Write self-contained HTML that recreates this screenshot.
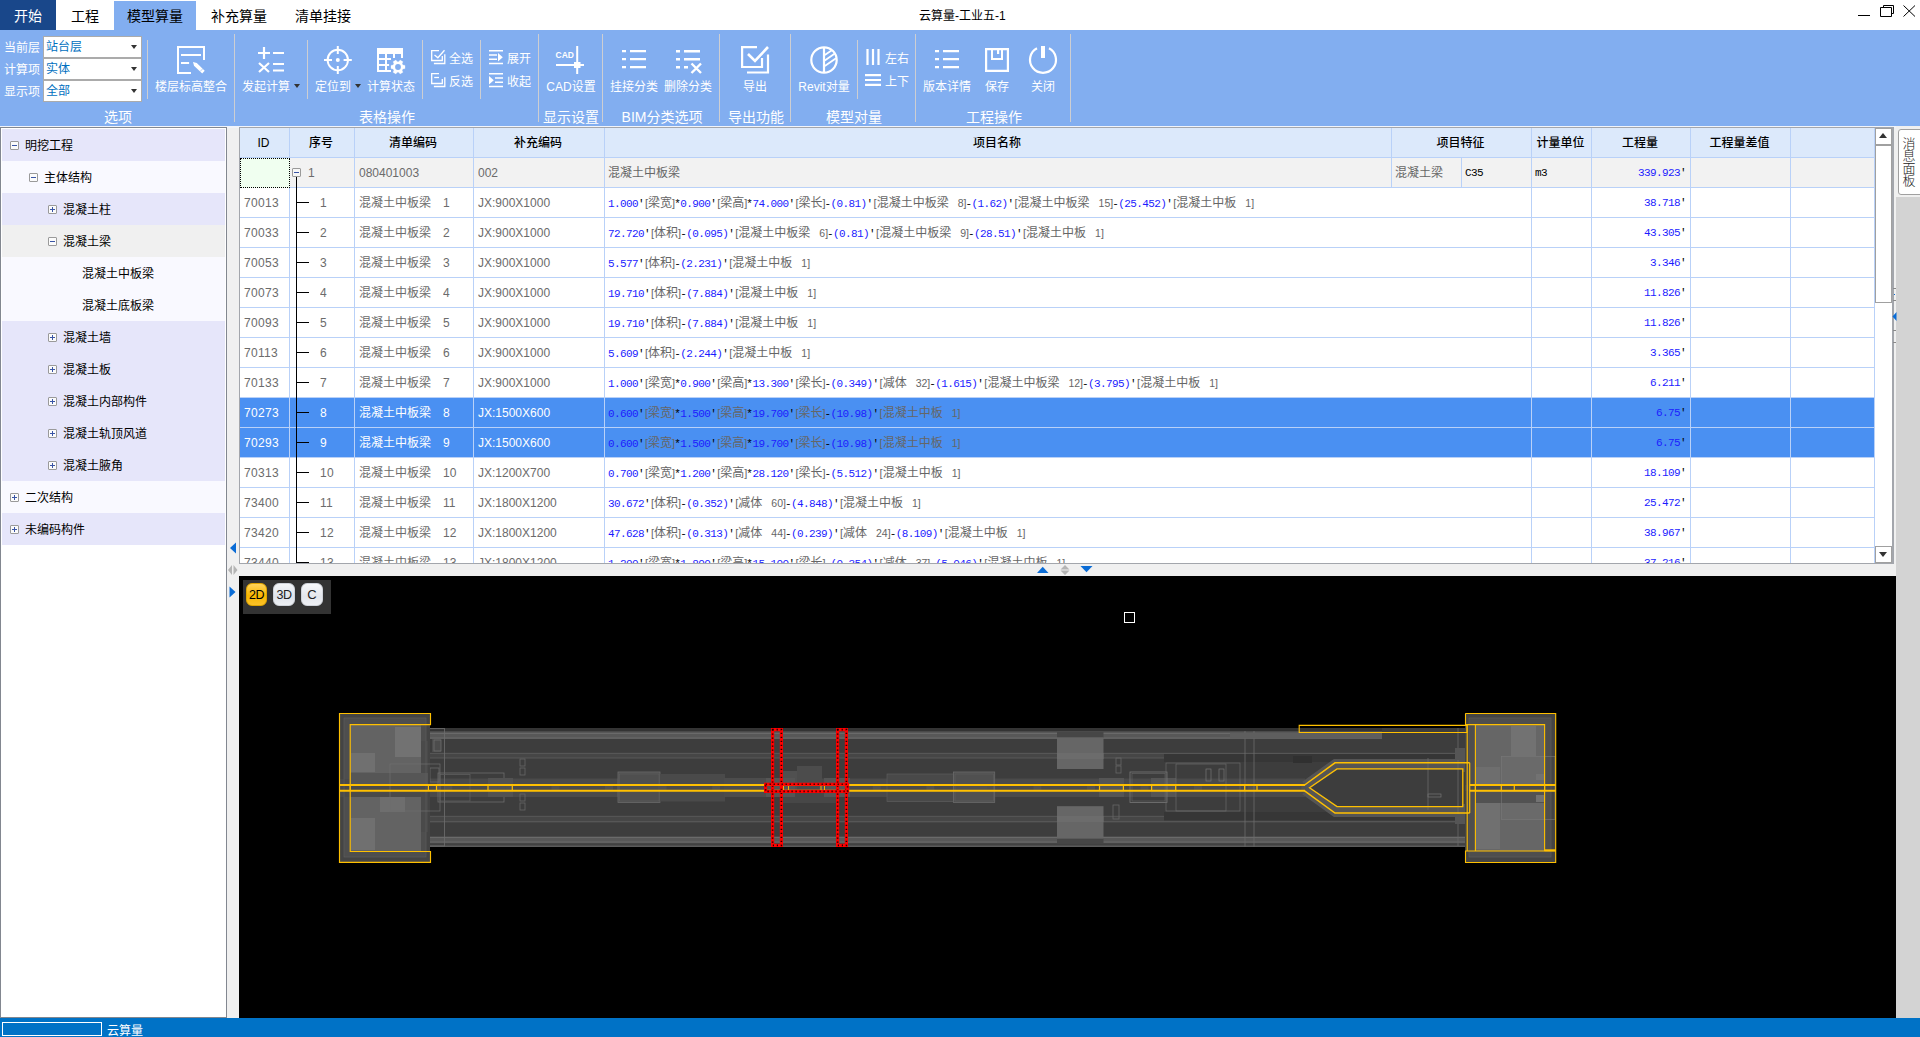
<!DOCTYPE html>
<html lang="zh-CN"><head><meta charset="utf-8"><title>云算量-工业五-1</title>
<style>
*{box-sizing:border-box}
html,body{margin:0;padding:0}
body{width:1920px;height:1037px;position:relative;overflow:hidden;background:#fff;
 font-family:"Liberation Sans","Noto Sans CJK SC",sans-serif;font-size:12px;color:#000}
.a{position:absolute}
.t{position:absolute;white-space:nowrap;line-height:16px;height:16px}
.w{color:#fff}
.tab{position:absolute;top:0;height:30px;line-height:33px;font-size:14px;text-align:center}
.rib{position:absolute;left:0;top:30px;width:1920px;height:96px;background:#82aef0}
.sep{position:absolute;width:1px;background:#cdced2}
.gl{position:absolute;top:109px;height:16px;line-height:16px;font-size:14px;color:#fff;white-space:nowrap;text-align:center}
.bl{position:absolute;top:79px;height:16px;line-height:16px;font-size:12px;color:#fff;white-space:nowrap;text-align:center}
.cb{position:absolute;left:43px;width:99px;height:22px;background:#fff;border:1px solid #ababab;color:#0070c0;font-size:12px;line-height:21px;padding-left:2px}
.cb i{position:absolute;right:4px;top:8px;width:0;height:0;border-left:3px solid transparent;border-right:3px solid transparent;border-top:4px solid #333}
svg{position:absolute;overflow:visible}
.tr{position:absolute;left:2px;width:223px;height:32px}
.tx{position:absolute;top:9px;line-height:16px;height:16px;font-size:12px;white-space:nowrap;font-weight:400;color:#000}
.bx{position:absolute;top:12px;width:9px;height:9px;border:1px solid #9a9a9a;background:#fbfbfb;border-radius:1px}
.bx:before{content:"";position:absolute;left:1px;top:3px;width:5px;height:1px;background:#3a55a5}
.bx.p:after{content:"";position:absolute;left:3px;top:1px;width:1px;height:5px;background:#3a55a5}
.row{position:absolute;left:240px;width:1635px;height:30px}
.c{position:absolute;top:0;height:30px;line-height:31px;white-space:nowrap;color:#6b6b6b;font-size:12px;overflow:hidden}
.hd{position:absolute;top:128px;height:30px;line-height:31px;text-align:center;font-weight:500;color:#000;font-size:12px;white-space:nowrap}
.m{font-family:"Liberation Mono","Noto Sans CJK SC",monospace;font-size:11px;letter-spacing:-0.6px}
.n{color:#1c1cff}
.g{color:#666;font-family:"Liberation Sans","Noto Sans CJK SC",sans-serif;font-size:12px;letter-spacing:0;font-weight:400;position:relative;left:1px}
.k{color:#000}
.vl{position:absolute;width:1px;background:#b9d1f8}
.hl{position:absolute;height:1px;background:#b9d1f8;left:240px;width:1635px}
</style></head><body>
<div class="tab" style="left:0;width:56px;background:#19478a;color:#fff">开始</div><div class="tab" style="left:56px;width:58px">工程</div><div class="tab" style="left:114px;width:82px;top:1px;height:29px;line-height:31px;background:#82aef0">模型算量</div><div class="tab" style="left:198px;width:82px">补充算量</div><div class="tab" style="left:282px;width:82px">清单挂接</div><div class="t" style="left:919px;top:8px;font-size:12px">云算量-工业五-1</div><svg style="left:1850px;top:0" width="70" height="30" fill="none" stroke="#000" stroke-width="1"><path d="M8 15.5H20"/><path d="M30.5 7.5H41.5V16.5H30.5Z"/><path d="M33.500 7.5V5.500H43.500V13.500H41.5"/><path d="M53.5 5.500L65 16.500M65 5.500L53.5 16.500"/></svg><div class="rib"></div><div class="t w" style="left:4px;top:40px">当前层</div><div class="cb" style="top:36px">站台层<i></i></div><div class="t w" style="left:4px;top:62px">计算项</div><div class="cb" style="top:58px">实体<i></i></div><div class="t w" style="left:4px;top:84px">显示项</div><div class="cb" style="top:80px">全部<i></i></div><div class="sep" style="left:147px;top:40px;height:59px"></div><div class="sep" style="left:307px;top:40px;height:59px"></div><div class="sep" style="left:422px;top:40px;height:59px"></div><div class="sep" style="left:480px;top:40px;height:59px"></div><div class="sep" style="left:857px;top:40px;height:59px"></div><div class="sep" style="left:234px;top:34px;height:88px"></div><div class="sep" style="left:538px;top:34px;height:88px"></div><div class="sep" style="left:602px;top:34px;height:88px"></div><div class="sep" style="left:719px;top:34px;height:88px"></div><div class="sep" style="left:790px;top:34px;height:88px"></div><div class="sep" style="left:915px;top:34px;height:88px"></div><div class="sep" style="left:1070px;top:34px;height:88px"></div><div class="gl" style="left:58px;width:120px">选项</div><div class="gl" style="left:327px;width:120px">表格操作</div><div class="gl" style="left:511px;width:120px">显示设置</div><div class="gl" style="left:602px;width:120px">BIM分类选项</div><div class="gl" style="left:696px;width:120px">导出功能</div><div class="gl" style="left:794px;width:120px">模型对量</div><div class="gl" style="left:934px;width:120px">工程操作</div><div class="bl" style="left:141px;width:100px">楼层标高整合</div><div class="bl" style="left:216px;width:100px">发起计算</div><div class="bl" style="left:283px;width:100px">定位到</div><div class="bl" style="left:341px;width:100px">计算状态</div><div class="bl" style="left:521px;width:100px">CAD设置</div><div class="bl" style="left:584px;width:100px">挂接分类</div><div class="bl" style="left:638px;width:100px">删除分类</div><div class="bl" style="left:705px;width:100px">导出</div><div class="bl" style="left:774px;width:100px">Revit对量</div><div class="bl" style="left:897px;width:100px">版本详情</div><div class="bl" style="left:947px;width:100px">保存</div><div class="bl" style="left:993px;width:100px">关闭</div><div class="a" style="left:294px;top:84px;width:0;height:0;border-left:3px solid transparent;border-right:3px solid transparent;border-top:4px solid #333"></div><div class="a" style="left:355px;top:84px;width:0;height:0;border-left:3px solid transparent;border-right:3px solid transparent;border-top:4px solid #333"></div><div class="t w" style="left:449px;top:51px">全选</div><div class="t w" style="left:449px;top:74px">反选</div><div class="t w" style="left:507px;top:51px">展开</div><div class="t w" style="left:507px;top:74px">收起</div><div class="t w" style="left:885px;top:51px">左右</div><div class="t w" style="left:885px;top:74px">上下</div><svg style="left:177px;top:46px" width="30" height="30" fill="none" stroke="#fff" stroke-width="2"><path d="M27 14V1H1V27H14"/><path d="M4 9H24M4 17H12.100" stroke-width="1.900"/><path d="M16 16L19.800 17L27.700 24.800L25.200 27.400L17 19.800Z" fill="#fff" stroke="none"/><path d="M25.800 22.700L23.100 25.500" stroke="#82aef0" stroke-width="0.600"/></svg><svg style="left:258px;top:47px" width="28" height="27" fill="none" stroke="#fff" stroke-width="2.200"><path d="M0 6H12M6 0V12M15 6H26"/><path d="M1 16L11 25M11 16L1 25"/><path d="M15 17H26M15 23.500H26"/></svg><svg style="left:324px;top:46px" width="28" height="28" fill="none" stroke="#fff" stroke-width="2"><circle cx="13.800" cy="14" r="10.200" stroke-width="1.900"/><path d="M13.800 0V8M13.800 20V28M0 14H8M19.600 14H27.800"/><circle cx="13.800" cy="14" r="2" fill="#fff" stroke="none"/></svg><svg style="left:377px;top:48px" width="29" height="27"><path fill="#fff" d="M0 0H26V10H24V6H18V10H16V6H10V10H14V12H10V16H12.100V18H10V22H14V24H0ZM2 6V10H8V6ZM2 12V16H8V12ZM2 18V22H8V18Z"/><path fill="#fff" stroke="#fff" stroke-width="0.300" stroke-linejoin="round" d="M25.900 17.100L28 17.400L28 20.600L25.900 20.900L25.100 22.300L25.900 24.300L23.100 25.900L21.800 24.200L20.200 24.200L18.900 25.900L16.100 24.300L16.900 22.300L16.100 20.900L14 20.600L14 17.400L16.100 17.100L16.900 15.700L16.100 13.700L18.900 12.100L20.200 13.800L21.800 13.800L23.100 12.100L25.900 13.700L25.100 15.700Z"/><circle cx="21" cy="19" r="2.900" fill="#82aef0"/></svg><svg style="left:431px;top:50px" width="15" height="15" fill="none" stroke="#fff" stroke-width="1.300"><path d="M8 0.700H0.700V10.500H11.300V6"/><path d="M3.500 4.900L6.900 7.800L13.500 0.300"/><path d="M2.900 13.500H13.800V4.300"/></svg><svg style="left:431px;top:73px" width="15" height="15" fill="none" stroke="#fff" stroke-width="1.300"><path d="M8 0.700H0.700V10.500H11.300V6"/><path d="M3.200 4.500H8"/><path d="M2.900 13.500H13.800V4.300"/></svg><svg style="left:489px;top:50px" width="15" height="15" fill="none" stroke="#fff" stroke-width="1.400"><path d="M0 0.700H14M0 5H8M0 9.300H8M0 13.500H14"/><path d="M9 3L13.800 7.200L9 11.500Z" fill="#fff" stroke="none"/></svg><svg style="left:489px;top:73px" width="15" height="15" fill="none" stroke="#fff" stroke-width="1.400"><path d="M0 0.700H14M6 5H14M6 9.300H14M0 13.500H14"/><path d="M0 3L4.800 7.200L0 11.500Z" fill="#fff" stroke="none"/></svg><svg style="left:556px;top:46px" width="30" height="30"><path d="M21.200 0V28M0 19H28" fill="none" stroke="#fff" stroke-width="2"/><rect x="18" y="16" width="6.500" height="6" fill="#fff"/><text x="-0.500" y="11.800" fill="#fff" font-family="Liberation Sans,sans-serif" font-weight="bold" font-size="8.500">CAD</text></svg><svg style="left:622px;top:50px" width="26" height="20" fill="none" stroke="#fff" stroke-width="2.200"><path d="M0 1.200H4M8 1.200H24M0 9.200H4M8 9.200H24M0 17.200H4M8 17.200H24"/></svg><svg style="left:935px;top:50px" width="26" height="20" fill="none" stroke="#fff" stroke-width="2.200"><path d="M0 1.200H4M8 1.200H24M0 9.200H4M8 9.200H24M0 17.200H4M8 17.200H24"/></svg><svg style="left:676px;top:50px" width="28" height="26" fill="none" stroke="#fff" stroke-width="2.400"><path d="M0 1.200H4M8 1.200H24M0 9.200H4M8 9.200H24M0 17.200H4M8 17.200H12"/><path d="M15.500 13.500L25 23M25 13.500L15.500 23"/></svg><svg style="left:741px;top:46px" width="29" height="29" fill="none" stroke="#fff" stroke-width="2.200"><path d="M21 12V21H1.100V1.100H16"/><path d="M7 8L14 15L27 1" stroke-width="2.600"/><path d="M6 26.500H27V8.500"/></svg><svg style="left:810px;top:46px" width="28" height="28" fill="none" stroke="#fff" stroke-width="2.200"><circle cx="14" cy="14" r="12.700"/><path d="M14 1V27"/><path d="M14.800 9L21.800 4.200M14.800 14.600L25.200 7.300M14.800 19.900L26.400 12" stroke-width="1.800"/></svg><svg style="left:866px;top:49px" width="14" height="16" fill="none" stroke="#fff" stroke-width="2.200"><path d="M1.500 0V16M7 0V16M12.500 0V16"/></svg><svg style="left:865px;top:74px" width="16" height="12" fill="none" stroke="#fff" stroke-width="2.200"><path d="M0 1.100H16M0 6H16M0 10.900H16"/></svg><svg style="left:985px;top:48px" width="24" height="24" fill="none" stroke="#fff" stroke-width="2.200"><path d="M1.100 1.100H22.900V22.900H1.100Z"/><path d="M7 2V11H17V2" stroke-width="2"/><path d="M13.100 2V6" stroke-width="2.200"/></svg><svg style="left:1029px;top:46px" width="28" height="28" fill="none" stroke="#fff" stroke-width="2.200"><path d="M8 2.300A13 13 0 1 0 20 2.300"/><path d="M14 0V12" stroke-width="4"/></svg><div class="a" style="left:0;top:126px;width:1920px;height:892px;background:#f0f0f0"></div><div class="a" style="left:0;top:126px;width:1920px;height:2px;background:#f1f4fa"></div><div class="a" style="left:0;top:127px;width:227px;height:891px;background:#fff;border:1px solid #828790"></div><div class="tr" style="top:129px;background:#e6e6fa"><span class="bx" style="left:8px"></span><span class="tx" style="left:23px">明挖工程</span></div><div class="tr" style="top:161px;background:#f9f9ff"><span class="bx" style="left:27px"></span><span class="tx" style="left:42px">主体结构</span></div><div class="tr" style="top:193px;background:#e6e6fa"><span class="bx p" style="left:46px"></span><span class="tx" style="left:61px">混凝土柱</span></div><div class="tr" style="top:225px;background:#f0f0f0"><span class="bx" style="left:46px"></span><span class="tx" style="left:61px">混凝土梁</span></div><div class="tr" style="top:257px;background:#f9f9ff"><span class="tx" style="left:80px">混凝土中板梁</span></div><div class="tr" style="top:289px;background:#f9f9ff"><span class="tx" style="left:80px">混凝土底板梁</span></div><div class="tr" style="top:321px;background:#e6e6fa"><span class="bx p" style="left:46px"></span><span class="tx" style="left:61px">混凝土墙</span></div><div class="tr" style="top:353px;background:#e6e6fa"><span class="bx p" style="left:46px"></span><span class="tx" style="left:61px">混凝土板</span></div><div class="tr" style="top:385px;background:#e6e6fa"><span class="bx p" style="left:46px"></span><span class="tx" style="left:61px">混凝土内部构件</span></div><div class="tr" style="top:417px;background:#e6e6fa"><span class="bx p" style="left:46px"></span><span class="tx" style="left:61px">混凝土轨顶风道</span></div><div class="tr" style="top:449px;background:#e6e6fa"><span class="bx p" style="left:46px"></span><span class="tx" style="left:61px">混凝土腋角</span></div><div class="tr" style="top:481px;background:#f9f9ff"><span class="bx p" style="left:8px"></span><span class="tx" style="left:23px">二次结构</span></div><div class="tr" style="top:513px;background:#e6e6fa"><span class="bx p" style="left:8px"></span><span class="tx" style="left:23px">未编码构件</span></div><svg style="left:227px;top:540px" width="12" height="60"><path d="M9 2.500V13.500L3 8Z" fill="#0a6cd6"/><path d="M5 25V35L1 30ZM6.500 25V35L10.500 30Z" fill="#b4b4b4"/><path d="M2.500 46.500V57.500L8.500 52Z" fill="#0a6cd6"/></svg><div class="a" style="left:239px;top:127px;width:1655px;height:437px;background:#fff;border:1px solid #a3a6ac;border-right:2px solid #a3a6ac"></div><div class="a" style="left:240px;top:128px;width:1635px;height:29px;background:#dce9fb"></div><div class="a" style="left:240px;top:158px;width:1635px;height:29px;background:#f2f2f2"></div><div class="a" style="left:240px;top:398px;width:1635px;height:59px;background:#4a90f2"></div><div class="hd" style="left:239px;width:49px">ID</div><div class="hd" style="left:289px;width:64px">序号</div><div class="hd" style="left:354px;width:118px">清单编码</div><div class="hd" style="left:473px;width:130px">补充编码</div><div class="hd" style="left:604px;width:786px">项目名称</div><div class="hd" style="left:1391px;width:139px">项目特征</div><div class="hd" style="left:1531px;width:59px">计量单位</div><div class="hd" style="left:1591px;width:98px">工程量</div><div class="hd" style="left:1690px;width:99px">工程量差值</div><div class="hd" style="left:1790px;width:83px"></div><div class="a" style="left:0;top:158px;width:1876px;height:405px;overflow:hidden"><div class="row" style="top:0px"><span class="c" style="left:68px;width:40px">1</span><span class="c" style="left:119px;width:110px">080401003</span><span class="c" style="left:238px;width:120px">002</span><span class="c" style="left:368px;width:300px;color:#666">混凝土中板梁</span><span class="c" style="left:1155px;width:66px;color:#666">混凝土梁</span><span class="c m k" style="left:1225px;width:60px;color:#000">C35</span><span class="c m k" style="left:1295px;width:50px;color:#000">m3</span><span class="c m" style="left:1352px;width:94px;text-align:right"><span class="n">339.923</span><span class="k" style="color:#000">&#39;</span></span></div><div class="row" style="top:30px"><span class="c" style="left:4px;width:44px;letter-spacing:0.300px;">70013</span><span class="c" style="left:80px;width:30px;letter-spacing:0.300px;">1</span><span class="c" style="left:119px;width:75px;">混凝土中板梁</span><span class="c" style="left:203px;width:30px;">1</span><span class="c" style="left:238px;width:125px;">JX:900X1000</span><span class="c m" style="left:368px;width:920px"><span class="n">1.000</span><span class="k">'</span><span class="g"><span style="font-size:11px">[</span>梁宽</span><span class="g" style="font-size:11px">]</span><span class="k">*</span><span class="n">0.900</span><span class="k">'</span><span class="g"><span style="font-size:11px">[</span>梁高</span><span class="g" style="font-size:11px">]</span><span class="k">*</span><span class="n">74.000</span><span class="k">'</span><span class="g"><span style="font-size:11px">[</span>梁长</span><span class="g" style="font-size:11px">]</span><span class="k">-</span><span class="n">(0.81)</span><span class="k">'</span><span class="g"><span style="font-size:11px">[</span>混凝土中板梁</span><span class="g" style="padding-left:9px;font-size:10.500px">8]</span><span class="k">-</span><span class="n">(1.62)</span><span class="k">'</span><span class="g"><span style="font-size:11px">[</span>混凝土中板梁</span><span class="g" style="padding-left:9px;font-size:10.500px">15]</span><span class="k">-</span><span class="n">(25.452)</span><span class="k">'</span><span class="g"><span style="font-size:11px">[</span>混凝土中板</span><span class="g" style="padding-left:9px;font-size:10.500px">1]</span></span><span class="c m" style="left:1352px;width:94px;text-align:right"><span class="n">38.718</span><span class="k" style="color:#000">&#39;</span></span></div><div class="row" style="top:60px"><span class="c" style="left:4px;width:44px;letter-spacing:0.300px;">70033</span><span class="c" style="left:80px;width:30px;letter-spacing:0.300px;">2</span><span class="c" style="left:119px;width:75px;">混凝土中板梁</span><span class="c" style="left:203px;width:30px;">2</span><span class="c" style="left:238px;width:125px;">JX:900X1000</span><span class="c m" style="left:368px;width:920px"><span class="n">72.720</span><span class="k">'</span><span class="g"><span style="font-size:11px">[</span>体积</span><span class="g" style="font-size:11px">]</span><span class="k">-</span><span class="n">(0.095)</span><span class="k">'</span><span class="g"><span style="font-size:11px">[</span>混凝土中板梁</span><span class="g" style="padding-left:9px;font-size:10.500px">6]</span><span class="k">-</span><span class="n">(0.81)</span><span class="k">'</span><span class="g"><span style="font-size:11px">[</span>混凝土中板梁</span><span class="g" style="padding-left:9px;font-size:10.500px">9]</span><span class="k">-</span><span class="n">(28.51)</span><span class="k">'</span><span class="g"><span style="font-size:11px">[</span>混凝土中板</span><span class="g" style="padding-left:9px;font-size:10.500px">1]</span></span><span class="c m" style="left:1352px;width:94px;text-align:right"><span class="n">43.305</span><span class="k" style="color:#000">&#39;</span></span></div><div class="row" style="top:90px"><span class="c" style="left:4px;width:44px;letter-spacing:0.300px;">70053</span><span class="c" style="left:80px;width:30px;letter-spacing:0.300px;">3</span><span class="c" style="left:119px;width:75px;">混凝土中板梁</span><span class="c" style="left:203px;width:30px;">3</span><span class="c" style="left:238px;width:125px;">JX:900X1000</span><span class="c m" style="left:368px;width:920px"><span class="n">5.577</span><span class="k">'</span><span class="g"><span style="font-size:11px">[</span>体积</span><span class="g" style="font-size:11px">]</span><span class="k">-</span><span class="n">(2.231)</span><span class="k">'</span><span class="g"><span style="font-size:11px">[</span>混凝土中板</span><span class="g" style="padding-left:9px;font-size:10.500px">1]</span></span><span class="c m" style="left:1352px;width:94px;text-align:right"><span class="n">3.346</span><span class="k" style="color:#000">&#39;</span></span></div><div class="row" style="top:120px"><span class="c" style="left:4px;width:44px;letter-spacing:0.300px;">70073</span><span class="c" style="left:80px;width:30px;letter-spacing:0.300px;">4</span><span class="c" style="left:119px;width:75px;">混凝土中板梁</span><span class="c" style="left:203px;width:30px;">4</span><span class="c" style="left:238px;width:125px;">JX:900X1000</span><span class="c m" style="left:368px;width:920px"><span class="n">19.710</span><span class="k">'</span><span class="g"><span style="font-size:11px">[</span>体积</span><span class="g" style="font-size:11px">]</span><span class="k">-</span><span class="n">(7.884)</span><span class="k">'</span><span class="g"><span style="font-size:11px">[</span>混凝土中板</span><span class="g" style="padding-left:9px;font-size:10.500px">1]</span></span><span class="c m" style="left:1352px;width:94px;text-align:right"><span class="n">11.826</span><span class="k" style="color:#000">&#39;</span></span></div><div class="row" style="top:150px"><span class="c" style="left:4px;width:44px;letter-spacing:0.300px;">70093</span><span class="c" style="left:80px;width:30px;letter-spacing:0.300px;">5</span><span class="c" style="left:119px;width:75px;">混凝土中板梁</span><span class="c" style="left:203px;width:30px;">5</span><span class="c" style="left:238px;width:125px;">JX:900X1000</span><span class="c m" style="left:368px;width:920px"><span class="n">19.710</span><span class="k">'</span><span class="g"><span style="font-size:11px">[</span>体积</span><span class="g" style="font-size:11px">]</span><span class="k">-</span><span class="n">(7.884)</span><span class="k">'</span><span class="g"><span style="font-size:11px">[</span>混凝土中板</span><span class="g" style="padding-left:9px;font-size:10.500px">1]</span></span><span class="c m" style="left:1352px;width:94px;text-align:right"><span class="n">11.826</span><span class="k" style="color:#000">&#39;</span></span></div><div class="row" style="top:180px"><span class="c" style="left:4px;width:44px;letter-spacing:0.300px;">70113</span><span class="c" style="left:80px;width:30px;letter-spacing:0.300px;">6</span><span class="c" style="left:119px;width:75px;">混凝土中板梁</span><span class="c" style="left:203px;width:30px;">6</span><span class="c" style="left:238px;width:125px;">JX:900X1000</span><span class="c m" style="left:368px;width:920px"><span class="n">5.609</span><span class="k">'</span><span class="g"><span style="font-size:11px">[</span>体积</span><span class="g" style="font-size:11px">]</span><span class="k">-</span><span class="n">(2.244)</span><span class="k">'</span><span class="g"><span style="font-size:11px">[</span>混凝土中板</span><span class="g" style="padding-left:9px;font-size:10.500px">1]</span></span><span class="c m" style="left:1352px;width:94px;text-align:right"><span class="n">3.365</span><span class="k" style="color:#000">&#39;</span></span></div><div class="row" style="top:210px"><span class="c" style="left:4px;width:44px;letter-spacing:0.300px;">70133</span><span class="c" style="left:80px;width:30px;letter-spacing:0.300px;">7</span><span class="c" style="left:119px;width:75px;">混凝土中板梁</span><span class="c" style="left:203px;width:30px;">7</span><span class="c" style="left:238px;width:125px;">JX:900X1000</span><span class="c m" style="left:368px;width:920px"><span class="n">1.000</span><span class="k">'</span><span class="g"><span style="font-size:11px">[</span>梁宽</span><span class="g" style="font-size:11px">]</span><span class="k">*</span><span class="n">0.900</span><span class="k">'</span><span class="g"><span style="font-size:11px">[</span>梁高</span><span class="g" style="font-size:11px">]</span><span class="k">*</span><span class="n">13.300</span><span class="k">'</span><span class="g"><span style="font-size:11px">[</span>梁长</span><span class="g" style="font-size:11px">]</span><span class="k">-</span><span class="n">(0.349)</span><span class="k">'</span><span class="g"><span style="font-size:11px">[</span>减体</span><span class="g" style="padding-left:9px;font-size:10.500px">32]</span><span class="k">-</span><span class="n">(1.615)</span><span class="k">'</span><span class="g"><span style="font-size:11px">[</span>混凝土中板梁</span><span class="g" style="padding-left:9px;font-size:10.500px">12]</span><span class="k">-</span><span class="n">(3.795)</span><span class="k">'</span><span class="g"><span style="font-size:11px">[</span>混凝土中板</span><span class="g" style="padding-left:9px;font-size:10.500px">1]</span></span><span class="c m" style="left:1352px;width:94px;text-align:right"><span class="n">6.211</span><span class="k" style="color:#000">&#39;</span></span></div><div class="row" style="top:240px"><span class="c" style="left:4px;width:44px;letter-spacing:0.300px;color:#fff;">70273</span><span class="c" style="left:80px;width:30px;letter-spacing:0.300px;color:#fff;">8</span><span class="c" style="left:119px;width:75px;color:#fff;">混凝土中板梁</span><span class="c" style="left:203px;width:30px;color:#fff;">8</span><span class="c" style="left:238px;width:125px;color:#fff;">JX:1500X600</span><span class="c m" style="left:368px;width:920px"><span class="n">0.600</span><span class="k">'</span><span class="g"><span style="font-size:11px">[</span>梁宽</span><span class="g" style="font-size:11px">]</span><span class="k">*</span><span class="n">1.500</span><span class="k">'</span><span class="g"><span style="font-size:11px">[</span>梁高</span><span class="g" style="font-size:11px">]</span><span class="k">*</span><span class="n">19.700</span><span class="k">'</span><span class="g"><span style="font-size:11px">[</span>梁长</span><span class="g" style="font-size:11px">]</span><span class="k">-</span><span class="n">(10.98)</span><span class="k">'</span><span class="g"><span style="font-size:11px">[</span>混凝土中板</span><span class="g" style="padding-left:9px;font-size:10.500px">1]</span></span><span class="c m" style="left:1352px;width:94px;text-align:right"><span class="n">6.75</span><span class="k" style="color:#000">&#39;</span></span></div><div class="row" style="top:270px"><span class="c" style="left:4px;width:44px;letter-spacing:0.300px;color:#fff;">70293</span><span class="c" style="left:80px;width:30px;letter-spacing:0.300px;color:#fff;">9</span><span class="c" style="left:119px;width:75px;color:#fff;">混凝土中板梁</span><span class="c" style="left:203px;width:30px;color:#fff;">9</span><span class="c" style="left:238px;width:125px;color:#fff;">JX:1500X600</span><span class="c m" style="left:368px;width:920px"><span class="n">0.600</span><span class="k">'</span><span class="g"><span style="font-size:11px">[</span>梁宽</span><span class="g" style="font-size:11px">]</span><span class="k">*</span><span class="n">1.500</span><span class="k">'</span><span class="g"><span style="font-size:11px">[</span>梁高</span><span class="g" style="font-size:11px">]</span><span class="k">*</span><span class="n">19.700</span><span class="k">'</span><span class="g"><span style="font-size:11px">[</span>梁长</span><span class="g" style="font-size:11px">]</span><span class="k">-</span><span class="n">(10.98)</span><span class="k">'</span><span class="g"><span style="font-size:11px">[</span>混凝土中板</span><span class="g" style="padding-left:9px;font-size:10.500px">1]</span></span><span class="c m" style="left:1352px;width:94px;text-align:right"><span class="n">6.75</span><span class="k" style="color:#000">&#39;</span></span></div><div class="row" style="top:300px"><span class="c" style="left:4px;width:44px;letter-spacing:0.300px;">70313</span><span class="c" style="left:80px;width:30px;letter-spacing:0.300px;">10</span><span class="c" style="left:119px;width:75px;">混凝土中板梁</span><span class="c" style="left:203px;width:30px;">10</span><span class="c" style="left:238px;width:125px;">JX:1200X700</span><span class="c m" style="left:368px;width:920px"><span class="n">0.700</span><span class="k">'</span><span class="g"><span style="font-size:11px">[</span>梁宽</span><span class="g" style="font-size:11px">]</span><span class="k">*</span><span class="n">1.200</span><span class="k">'</span><span class="g"><span style="font-size:11px">[</span>梁高</span><span class="g" style="font-size:11px">]</span><span class="k">*</span><span class="n">28.120</span><span class="k">'</span><span class="g"><span style="font-size:11px">[</span>梁长</span><span class="g" style="font-size:11px">]</span><span class="k">-</span><span class="n">(5.512)</span><span class="k">'</span><span class="g"><span style="font-size:11px">[</span>混凝土中板</span><span class="g" style="padding-left:9px;font-size:10.500px">1]</span></span><span class="c m" style="left:1352px;width:94px;text-align:right"><span class="n">18.109</span><span class="k" style="color:#000">&#39;</span></span></div><div class="row" style="top:330px"><span class="c" style="left:4px;width:44px;letter-spacing:0.300px;">73400</span><span class="c" style="left:80px;width:30px;letter-spacing:0.300px;">11</span><span class="c" style="left:119px;width:75px;">混凝土中板梁</span><span class="c" style="left:203px;width:30px;">11</span><span class="c" style="left:238px;width:125px;">JX:1800X1200</span><span class="c m" style="left:368px;width:920px"><span class="n">30.672</span><span class="k">'</span><span class="g"><span style="font-size:11px">[</span>体积</span><span class="g" style="font-size:11px">]</span><span class="k">-</span><span class="n">(0.352)</span><span class="k">'</span><span class="g"><span style="font-size:11px">[</span>减体</span><span class="g" style="padding-left:9px;font-size:10.500px">60]</span><span class="k">-</span><span class="n">(4.848)</span><span class="k">'</span><span class="g"><span style="font-size:11px">[</span>混凝土中板</span><span class="g" style="padding-left:9px;font-size:10.500px">1]</span></span><span class="c m" style="left:1352px;width:94px;text-align:right"><span class="n">25.472</span><span class="k" style="color:#000">&#39;</span></span></div><div class="row" style="top:360px"><span class="c" style="left:4px;width:44px;letter-spacing:0.300px;">73420</span><span class="c" style="left:80px;width:30px;letter-spacing:0.300px;">12</span><span class="c" style="left:119px;width:75px;">混凝土中板梁</span><span class="c" style="left:203px;width:30px;">12</span><span class="c" style="left:238px;width:125px;">JX:1800X1200</span><span class="c m" style="left:368px;width:920px"><span class="n">47.628</span><span class="k">'</span><span class="g"><span style="font-size:11px">[</span>体积</span><span class="g" style="font-size:11px">]</span><span class="k">-</span><span class="n">(0.313)</span><span class="k">'</span><span class="g"><span style="font-size:11px">[</span>减体</span><span class="g" style="padding-left:9px;font-size:10.500px">44]</span><span class="k">-</span><span class="n">(0.239)</span><span class="k">'</span><span class="g"><span style="font-size:11px">[</span>减体</span><span class="g" style="padding-left:9px;font-size:10.500px">24]</span><span class="k">-</span><span class="n">(8.109)</span><span class="k">'</span><span class="g"><span style="font-size:11px">[</span>混凝土中板</span><span class="g" style="padding-left:9px;font-size:10.500px">1]</span></span><span class="c m" style="left:1352px;width:94px;text-align:right"><span class="n">38.967</span><span class="k" style="color:#000">&#39;</span></span></div><div class="row" style="top:390px"><span class="c" style="left:4px;width:44px;letter-spacing:0.300px;">73440</span><span class="c" style="left:80px;width:30px;letter-spacing:0.300px;">13</span><span class="c" style="left:119px;width:75px;">混凝土中板梁</span><span class="c" style="left:203px;width:30px;">13</span><span class="c" style="left:238px;width:125px;">JX:1800X1200</span><span class="c m" style="left:368px;width:920px"><span class="n">1.200</span><span class="k">'</span><span class="g"><span style="font-size:11px">[</span>梁宽</span><span class="g" style="font-size:11px">]</span><span class="k">*</span><span class="n">1.800</span><span class="k">'</span><span class="g"><span style="font-size:11px">[</span>梁高</span><span class="g" style="font-size:11px">]</span><span class="k">*</span><span class="n">15.100</span><span class="k">'</span><span class="g"><span style="font-size:11px">[</span>梁长</span><span class="g" style="font-size:11px">]</span><span class="k">-</span><span class="n">(0.354)</span><span class="k">'</span><span class="g"><span style="font-size:11px">[</span>减体</span><span class="g" style="padding-left:9px;font-size:10.500px">37]</span><span class="k">-</span><span class="n">(5.046)</span><span class="k">'</span><span class="g"><span style="font-size:11px">[</span>混凝土中板</span><span class="g" style="padding-left:9px;font-size:10.500px">1]</span></span><span class="c m" style="left:1352px;width:94px;text-align:right"><span class="n">37.216</span><span class="k" style="color:#000">&#39;</span></span></div></div><div class="hl" style="top:157px"></div><div class="hl" style="top:187px"></div><div class="hl" style="top:217px"></div><div class="hl" style="top:247px"></div><div class="hl" style="top:277px"></div><div class="hl" style="top:307px"></div><div class="hl" style="top:337px"></div><div class="hl" style="top:367px"></div><div class="hl" style="top:397px"></div><div class="hl" style="top:427px"></div><div class="hl" style="top:457px"></div><div class="hl" style="top:487px"></div><div class="hl" style="top:517px"></div><div class="hl" style="top:547px"></div><div class="vl" style="left:289px;top:128px;height:435px"></div><div class="vl" style="left:354px;top:128px;height:435px"></div><div class="vl" style="left:473px;top:128px;height:435px"></div><div class="vl" style="left:1531px;top:128px;height:435px"></div><div class="vl" style="left:1591px;top:128px;height:435px"></div><div class="vl" style="left:1690px;top:128px;height:435px"></div><div class="vl" style="left:1790px;top:128px;height:435px"></div><div class="vl" style="left:1874px;top:128px;height:435px"></div><div class="vl" style="left:604px;top:128px;height:435px"></div><div class="vl" style="left:1391px;top:128px;height:59px"></div><div class="vl" style="left:1461px;top:158px;height:29px"></div><div class="a" style="left:240px;top:158px;width:50px;height:30px;background:#f0fff0;border:1px dotted #000"></div><div class="a" style="left:296px;top:177px;width:1px;height:386px;background:#000"></div><div class="a" style="left:296px;top:202px;width:13px;height:1px;background:#000"></div><div class="a" style="left:296px;top:232px;width:13px;height:1px;background:#000"></div><div class="a" style="left:296px;top:262px;width:13px;height:1px;background:#000"></div><div class="a" style="left:296px;top:292px;width:13px;height:1px;background:#000"></div><div class="a" style="left:296px;top:322px;width:13px;height:1px;background:#000"></div><div class="a" style="left:296px;top:352px;width:13px;height:1px;background:#000"></div><div class="a" style="left:296px;top:382px;width:13px;height:1px;background:#000"></div><div class="a" style="left:296px;top:412px;width:13px;height:1px;background:#000"></div><div class="a" style="left:296px;top:442px;width:13px;height:1px;background:#000"></div><div class="a" style="left:296px;top:472px;width:13px;height:1px;background:#000"></div><div class="a" style="left:296px;top:502px;width:13px;height:1px;background:#000"></div><div class="a" style="left:296px;top:532px;width:13px;height:1px;background:#000"></div><div class="a" style="left:296px;top:562px;width:13px;height:1px;background:#000"></div><div class="a" style="left:292px;top:168px;width:9px;height:9px;border:1px solid #9a9a9a;background:#f6f6f6;border-radius:1px"><div class="a" style="left:1px;top:3px;width:5px;height:1px;background:#3a55a5"></div></div><div class="a" style="left:1875px;top:128px;width:17px;height:435px;background:#fff"></div><div class="a" style="left:1875px;top:128px;width:17px;height:17px;border:1px solid #a0a0a0;background:#fff"></div><div class="a" style="left:1879px;top:133px;width:0;height:0;border-left:4.500px solid transparent;border-right:4.500px solid transparent;border-bottom:5px solid #333"></div><div class="a" style="left:1875px;top:145px;width:17px;height:158px;border:1px solid #a0a0a0;background:#fff"></div><div class="a" style="left:1875px;top:546px;width:17px;height:17px;border:1px solid #a0a0a0;background:#fff"></div><div class="a" style="left:1879px;top:552px;width:0;height:0;border-left:4.500px solid transparent;border-right:4.500px solid transparent;border-top:5px solid #333"></div><div class="a" style="left:1896px;top:126px;width:24px;height:892px;background:#d3d3d3"></div><div class="a" style="left:1896px;top:126px;width:24px;height:71px;background:#f0f0f0"></div><div class="a" style="left:1898px;top:129px;width:24px;height:66px;background:#fff;border:1px solid #a0a0a0;border-radius:3px 0 0 3px"></div><div class="a" style="left:1902px;top:138px;width:14px;font-size:13px;line-height:12.300px;font-weight:300;color:#222;text-align:center">消息面板</div><svg style="left:1892px;top:280px" width="5" height="70"><path d="M4.500 32V41L0.500 36.500Z" fill="#0a6cd6"/><path d="M1 8.500H4M1 20.500H4M1 50.500H4M1 62.500H4" stroke="#8a8a8a" stroke-width="1" fill="none"/><rect x="2" y="14" width="1" height="1" fill="#0a6cd6"/></svg><svg style="left:1036px;top:564px" width="60" height="12"><path d="M1 9H12.500L6.700 2.800Z" fill="#0a6cd6"/><path d="M24.500 5.500H33.500L29 1ZM24.500 6.500H33.500L29 11Z" fill="#b4b4b4"/><path d="M44.500 2H56.500L50.500 8.200Z" fill="#0a6cd6"/></svg><div class="a" style="left:239px;top:576px;width:1657px;height:442px;background:#000"></div><div class="a" style="left:243px;top:580px;width:88px;height:34px;background:#333"></div><div class="a" style="left:246px;top:583px;width:21px;height:23px;border-radius:6px;background:linear-gradient(#ffd45c,#f8b700 55%,#fcc22a);border:1px solid #e0a500;font-size:12.500px;line-height:22px;text-align:center;letter-spacing:-0.500px">2D</div><div class="a" style="left:273px;top:583px;width:22px;height:23px;border-radius:6px;background:linear-gradient(#f4f6f9,#dfe3ea 60%,#eceff3);border:1px solid #cfd3da;font-size:12.500px;line-height:22px;text-align:center;letter-spacing:-0.500px;color:#222">3D</div><div class="a" style="left:301px;top:583px;width:22px;height:23px;border-radius:6px;background:linear-gradient(#f7f8fa,#e3e6ec 60%,#eef0f4);border:1px solid #cfd3da;font-size:13px;line-height:22px;text-align:center;color:#222">C</div><div class="a" style="left:1124px;top:612px;width:11px;height:11px;border:1px solid #fff"></div><svg style="left:239px;top:576px" width="1657" height="442" viewBox="239 576 1657 442" shape-rendering="auto"><rect x="428" y="728" width="1040" height="118.7" fill="#3d3d3d" /><rect x="428" y="728" width="1040" height="3" fill="#343434" /><rect x="428" y="731.5" width="1040" height="7.5" fill="#585858" /><rect x="428" y="733" width="1040" height="1" fill="#6a6a6a" /><rect x="428" y="737.5" width="1040" height="1.0" fill="#6a6a6a" /><rect x="428" y="752.5" width="1040" height="6.5" fill="#464646" /><rect x="428" y="753" width="1040" height="0.8" fill="#5a5a5a" /><rect x="428" y="757.5" width="1040" height="0.8" fill="#585858" /><rect x="428" y="778.5" width="877" height="18.5" fill="#4a4a4a" /><rect x="428" y="815.5" width="1040" height="7.5" fill="#464646" /><rect x="428" y="816" width="1040" height="0.8" fill="#585858" /><rect x="428" y="821" width="1040" height="0.8" fill="#5a5a5a" /><rect x="428" y="836.5" width="1040" height="7.0" fill="#585858" /><rect x="428" y="837" width="1040" height="1" fill="#6a6a6a" /><rect x="428" y="841.5" width="1040" height="1.0" fill="#6a6a6a" /><rect x="428" y="843.5" width="1040" height="3.2" fill="#414141" /><rect x="428" y="845.7" width="1040" height="1.0" fill="#6a6a6a" /><rect x="428.5" y="728.5" width="16.0" height="117.5" fill="none" stroke="#6e6e6e" stroke-width="0.8"/><rect x="432" y="739" width="9" height="13" fill="#4c4c4c" /><rect x="434" y="740" width="7" height="11" fill="none" stroke="#6e6e6e" stroke-width="0.8"/><rect x="430" y="768" width="9" height="14" fill="none" stroke="#6a6a6a" stroke-width="0.8"/><rect x="438" y="773" width="66" height="29" fill="none" stroke="#6c6c6c" stroke-width="0.8"/><rect x="440" y="774.5" width="30" height="26.5" fill="none" stroke="#5e5e5e" stroke-width="0.8"/><rect x="488" y="778" width="25" height="19" fill="#525252" /><rect x="520" y="759" width="5" height="7" fill="none" stroke="#666" stroke-width="0.8"/><rect x="520" y="768" width="5" height="7" fill="none" stroke="#666" stroke-width="0.8"/><rect x="520" y="794" width="5" height="7" fill="none" stroke="#666" stroke-width="0.8"/><rect x="520" y="803" width="5" height="7" fill="none" stroke="#666" stroke-width="0.8"/><rect x="618" y="772" width="42" height="30.5" fill="#4f4f4f" /><rect x="618" y="772" width="42" height="30.5" fill="none" stroke="#6a6a6a" stroke-width="0.8"/><rect x="619.5" y="774" width="39.5" height="27" fill="none" stroke="#606060" stroke-width="0.6"/><rect x="660" y="774" width="65" height="27.5" fill="#4a4a4a" /><rect x="724" y="778" width="71" height="19" fill="#4c4c4c" /><rect x="783" y="771" width="14" height="19" fill="#505050" /><rect x="797" y="766" width="25" height="17" fill="#4c4c4c" /><rect x="783" y="793" width="53" height="10" fill="#474747" /><rect x="766" y="778" width="29" height="19" fill="#555" /><rect x="824" y="778" width="26" height="19" fill="#555" /><rect x="887" y="774" width="66.4" height="27.6" fill="#494949" /><rect x="887" y="774" width="66.4" height="27.6" fill="none" stroke="#5c5c5c" stroke-width="0.7"/><rect x="953.4" y="772" width="41.3" height="30.5" fill="#505050" /><rect x="953.4" y="772" width="41.3" height="30.5" fill="none" stroke="#6a6a6a" stroke-width="0.8"/><rect x="955" y="774" width="38.5" height="27" fill="none" stroke="#606060" stroke-width="0.6"/><rect x="444.4" y="786" width="8.0" height="4" fill="#525252" /><rect x="497.9" y="786" width="8.0" height="4" fill="#525252" /><rect x="551.5" y="786" width="8.0" height="4" fill="#525252" /><rect x="605.0" y="786" width="8.0" height="4" fill="#525252" /><rect x="658.5" y="786" width="8.0" height="4" fill="#525252" /><rect x="712.1" y="786" width="8.0" height="4" fill="#525252" /><rect x="765.6" y="786" width="8.0" height="4" fill="#525252" /><rect x="819.2" y="786" width="8.0" height="4" fill="#525252" /><rect x="872.8" y="786" width="8.0" height="4" fill="#525252" /><rect x="926.3" y="786" width="8.0" height="4" fill="#525252" /><rect x="979.8" y="786" width="8.0" height="4" fill="#525252" /><rect x="1033.4" y="786" width="8.0" height="4" fill="#525252" /><rect x="1087.0" y="786" width="8.0" height="4" fill="#525252" /><rect x="1140.5" y="786" width="8.0" height="4" fill="#525252" /><rect x="1194.0" y="786" width="8.0" height="4" fill="#525252" /><rect x="1247.6" y="786" width="8.0" height="4" fill="#525252" /><rect x="1301.2" y="786" width="8.0" height="4" fill="#525252" /><rect x="1057" y="732" width="46.5" height="5.5" fill="#464646" /><rect x="1057" y="838.5" width="46.5" height="4.5" fill="#464646" /><rect x="1057" y="737.5" width="46.5" height="31.5" fill="#666" /><rect x="1057" y="806.2" width="46.5" height="32.3" fill="#666" /><rect x="1057" y="753" width="46.5" height="6" fill="#6c6c6c" /><rect x="1057" y="816" width="46.5" height="6" fill="#6c6c6c" /><rect x="1116" y="758" width="5" height="7" fill="none" stroke="#666" stroke-width="0.8"/><rect x="1116" y="766" width="5" height="7" fill="none" stroke="#666" stroke-width="0.8"/><rect x="1113" y="805" width="6" height="14" fill="none" stroke="#666" stroke-width="0.8"/><rect x="1099" y="778" width="25" height="19" fill="#555" /><rect x="1151" y="778" width="25" height="19" fill="#555" /><rect x="1130" y="772" width="37" height="30.5" fill="none" stroke="#777" stroke-width="0.8"/><rect x="1132" y="773.5" width="33" height="27.5" fill="none" stroke="#666" stroke-width="0.6"/><rect x="1164" y="754" width="304" height="8" fill="#363636" /><rect x="1164" y="812" width="304" height="8.5" fill="#363636" /><rect x="1166" y="763" width="74" height="48" fill="none" stroke="#6a6a6a" stroke-width="0.7"/><rect x="1176" y="764" width="50" height="47" fill="none" stroke="#6a6a6a" stroke-width="0.7"/><rect x="1206" y="769" width="5" height="12" fill="none" stroke="#777" stroke-width="0.7"/><rect x="1219" y="769" width="5" height="12" fill="none" stroke="#777" stroke-width="0.7"/><path d="M1245 728V846.700M1254 728V846.700" stroke="#6c6c6c" stroke-width="0.800" fill="none"/><rect x="1230" y="728" width="70" height="3" fill="#2f2f2f" /><rect x="1293" y="756" width="19" height="7" fill="#303030" /><path d="M1306 787L1336 765.500H1468M1306 789L1336 810.500H1468" fill="none" stroke="#555" stroke-width="13"/><path d="M1311 787.800L1337.500 769.500H1462V806H1337.500Z" fill="#3d3d3d"/><rect x="1382" y="728" width="86" height="11" fill="#3d3d3d" /><rect x="1230" y="733" width="152" height="5.5" fill="#5e5e5e" /><rect x="1428" y="794" width="13" height="3" fill="none" stroke="#777" stroke-width="0.7"/><path d="M1428 758V810M1458 728V846" stroke="#6a6a6a" stroke-width="0.800" fill="none"/><rect x="1455" y="748" width="13" height="12" fill="#555" /><rect x="1455" y="814" width="13" height="10" fill="#555" /><rect x="339" y="713" width="91" height="149" fill="#444" /><rect x="344" y="718" width="82" height="139" fill="#4e4e4e" /><rect x="350" y="725" width="71" height="127" fill="#636363" /><rect x="395" y="727" width="26" height="30" fill="#727272" /><rect x="351" y="753" width="24" height="19" fill="#707070" /><rect x="351" y="818" width="24" height="32" fill="#707070" /><rect x="380" y="793" width="25" height="19" fill="#6e6e6e" /><rect x="421" y="741" width="7" height="91" fill="#4a4a4a" /><rect x="339" y="779" width="89" height="18" fill="#4a4a4a" /><rect x="350" y="773" width="78" height="11" fill="#565656" /><rect x="344" y="718" width="82" height="139" fill="none" stroke="#5c5c5c" stroke-width="0.7"/><rect x="390" y="764" width="50" height="47" fill="none" stroke="#6e6e6e" stroke-width="0.7"/><rect x="1465" y="713" width="91" height="149" fill="#444" /><rect x="1469" y="718" width="82" height="139" fill="#4e4e4e" /><rect x="1476" y="725" width="68" height="126" fill="#666" /><rect x="1511" y="726" width="25" height="30" fill="#727272" /><rect x="1476" y="767" width="24" height="18" fill="#6e6e6e" /><rect x="1476" y="803" width="24" height="46" fill="#707070" /><rect x="1501" y="756" width="43" height="64" fill="#6a6a6a" /><rect x="1476" y="792" width="68" height="11" fill="#525252" /><rect x="1536" y="774" width="8" height="6" fill="#727272" /><rect x="1536" y="795" width="8" height="7" fill="#727272" /><rect x="1465" y="785" width="91" height="6" fill="#4a4a4a" /><rect x="1469" y="718" width="82" height="139" fill="none" stroke="#5c5c5c" stroke-width="0.7"/><rect x="1501.5" y="756.5" width="53.5" height="63.0" fill="none" stroke="#787878" stroke-width="0.6"/><path d="M339.500 713.500H430.500V724.600H350.200V851.500H430.500V862.300H339.500Z" fill="none" stroke="#ffc000" stroke-width="1.15" stroke-linejoin="miter"/><path d="M339.500 785H1305M339.500 790.850H1305" fill="none" stroke="#ffc000" stroke-width="2" stroke-linejoin="miter"/><path d="M350.200 785V790.600M428.400 785V790.600M436.500 785V790.600M488 785V790.600M512.300 785V790.600M1099.500 785V790.600M1123.400 785V790.600M1151.600 785V790.600M1175.700 785V790.600M1244.700 785V790.600M1257 785V790.600" fill="none" stroke="#ffc000" stroke-width="1.2" stroke-linejoin="miter"/><path d="M1304.600 785L1335 762.800H1469.700M1304.600 790.850L1335 813.100H1469.700" fill="none" stroke="#ffc000" stroke-width="1.5" stroke-linejoin="miter"/><path d="M1309.500 787.800L1337 768.900H1462.800V806.600H1337Z" fill="none" stroke="#ffc000" stroke-width="1.3" stroke-linejoin="miter"/><path d="M1469.700 762.800V813.100" fill="none" stroke="#ffc000" stroke-width="1.2" stroke-linejoin="miter"/><path d="M1299.200 725.400H1467V732.500H1299.200Z" fill="none" stroke="#ffc000" stroke-width="1.1" stroke-linejoin="miter"/><path d="M1465.500 713.500H1555.700V862.500H1465.500V851H1555.700M1465.500 713.500V724.600H1544.600V851" fill="none" stroke="#ffc000" stroke-width="1.1" stroke-linejoin="miter"/><path d="M1467.200 724.600V851M1475.400 724.600V851" fill="none" stroke="#ffc000" stroke-width="1.1" stroke-linejoin="miter"/><path d="M1469.700 785H1555.700M1469.700 790.850H1555.700" fill="none" stroke="#ffc000" stroke-width="2" stroke-linejoin="miter"/><path d="M1475.400 785V790.600M1501.300 785V790.600M1514.300 785V790.600M1544.600 785V790.600" fill="none" stroke="#ffc000" stroke-width="1.2" stroke-linejoin="miter"/><path d="M1544.600 850.300H1555.700" fill="none" stroke="#ffc000" stroke-width="2" stroke-linejoin="miter"/><rect x="772.6" y="729.6" width="8.8" height="115.8" fill="none" stroke="#ff0000" stroke-width="3.200"/><rect x="772.6" y="729.6" width="8.8" height="115.8" fill="none" stroke="#200000" stroke-width="1.600" stroke-dasharray="1.200 2.800"/><rect x="837.6" y="729.6" width="8.8" height="115.8" fill="none" stroke="#ff0000" stroke-width="3.200"/><rect x="837.6" y="729.6" width="8.8" height="115.8" fill="none" stroke="#200000" stroke-width="1.600" stroke-dasharray="1.200 2.800"/><rect x="765.6" y="784.3000000000001" width="82.0" height="7.1" fill="none" stroke="#ff0000" stroke-width="3.200"/><rect x="765.6" y="784.3000000000001" width="82.0" height="7.1" fill="none" stroke="#200000" stroke-width="1.600" stroke-dasharray="1.200 2.800"/><path d="M783.500 786V790M788.500 786V790M821 786V790M824.500 786V790" fill="none" stroke="#ffc000" stroke-width="0.9" stroke-linejoin="miter"/></svg><div class="a" style="left:0;top:1018px;width:1920px;height:19px;background:#0072c6"></div><div class="a" style="left:2px;top:1022px;width:100px;height:14px;border:1px solid #fff"></div><div class="t w" style="left:107px;top:1023px">云算量</div></body></html>
